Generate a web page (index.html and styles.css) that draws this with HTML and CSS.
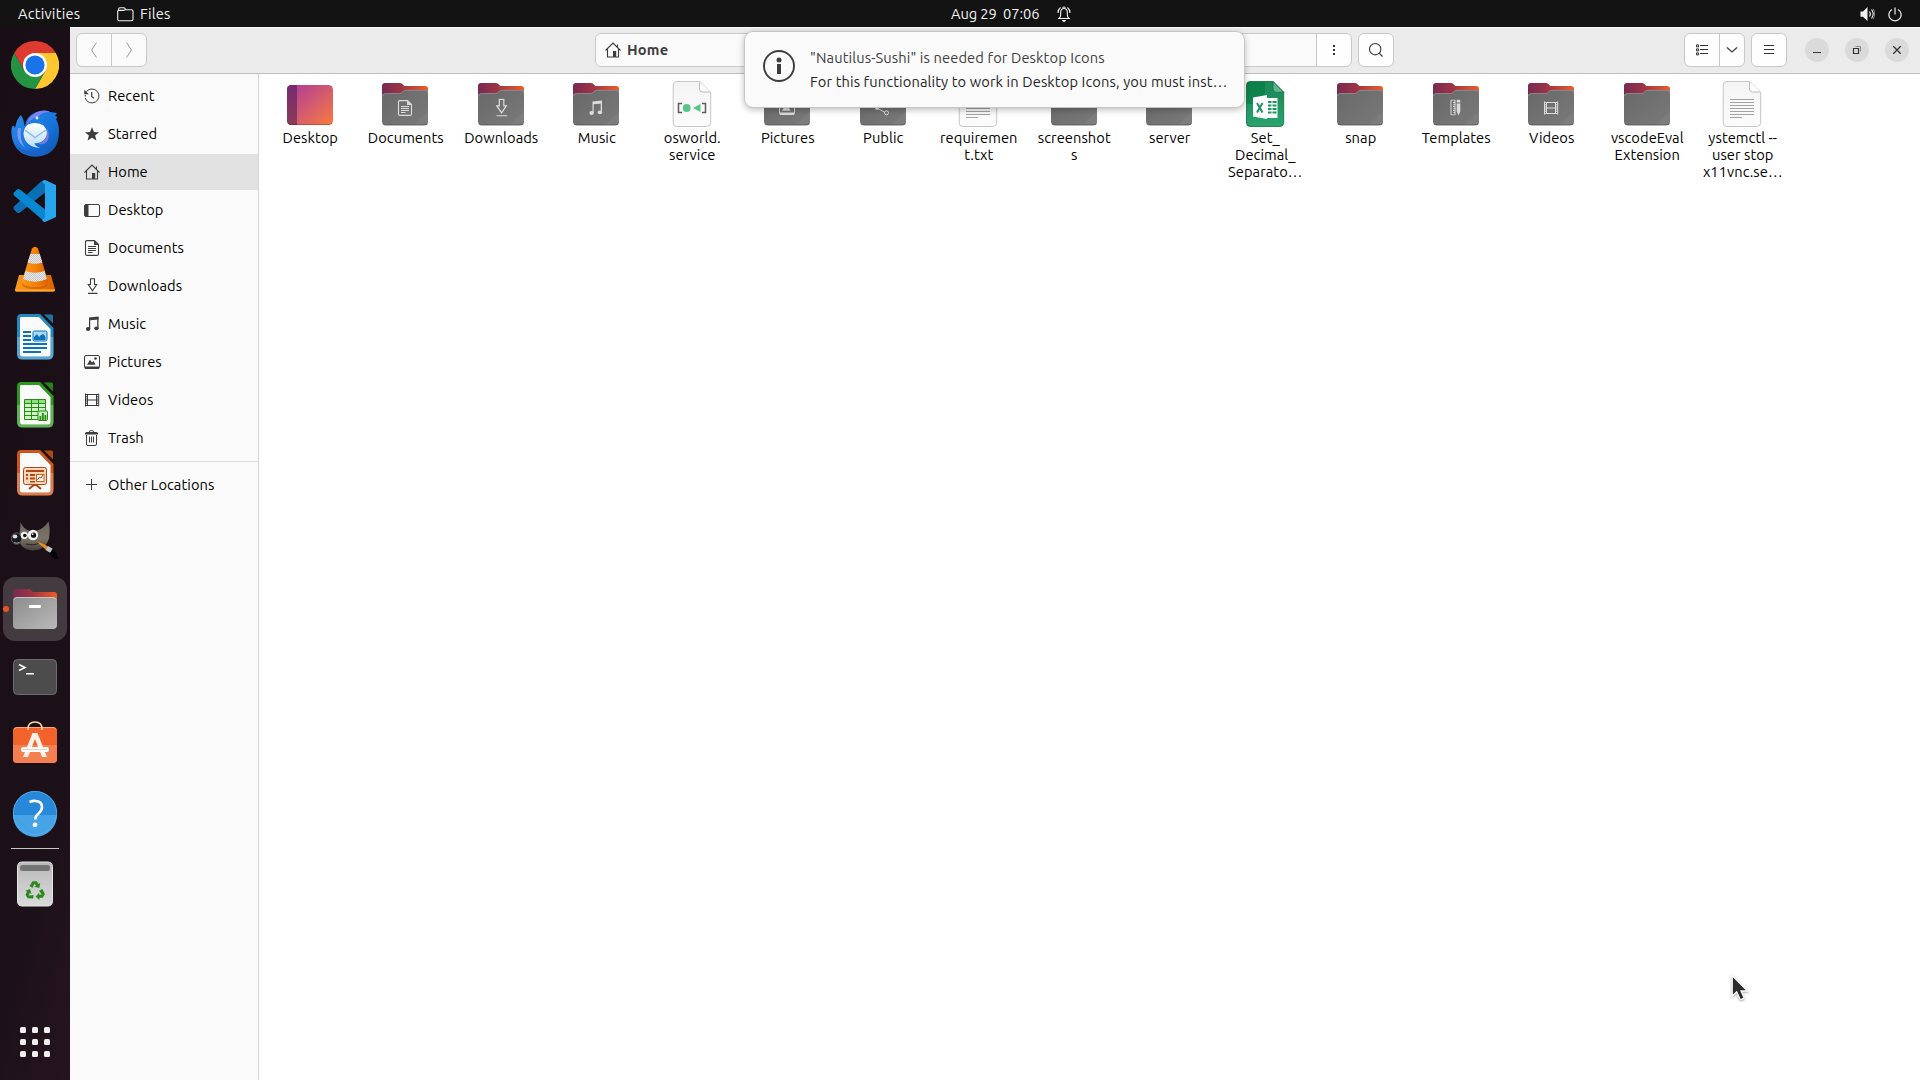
FILE: index.html
```html
<!DOCTYPE html>
<html lang="en">
<head>
<meta charset="utf-8">
<title>Files</title>
<link rel="stylesheet" href="styles.css">
</head>
<body>
<svg class="defs" aria-hidden="true">
  <defs>
    <linearGradient id="gTab" x1="0" y1="0" x2="1" y2="0"><stop offset="0" stop-color="#772953"/><stop offset=".45" stop-color="#a03543"/><stop offset="1" stop-color="#ef5c26"/></linearGradient>
    <linearGradient id="gFront" x1="0" y1="0" x2="1" y2="1"><stop offset="0" stop-color="#686868"/><stop offset="1" stop-color="#7a7a7a"/></linearGradient>
    <linearGradient id="gDesk" x1="0" y1="0" x2="1" y2="1"><stop offset="0" stop-color="#aa3a9a"/><stop offset=".55" stop-color="#d65d6b"/><stop offset="1" stop-color="#fa7a3c"/></linearGradient>
    <linearGradient id="gDeskL" x1="0" y1="0" x2="0" y2="1"><stop offset="0" stop-color="#762a72"/><stop offset="1" stop-color="#8d3b58"/></linearGradient>
    <linearGradient id="gDoc" x1="0" y1="0" x2="0" y2="1"><stop offset="0" stop-color="#f4f4f4"/><stop offset="1" stop-color="#fcfcfc"/></linearGradient>
    <linearGradient id="gXls" x1="0" y1="0" x2="0" y2="1"><stop offset="0" stop-color="#0b7f49"/><stop offset=".5" stop-color="#0f8852"/><stop offset=".5" stop-color="#1f9763"/><stop offset="1" stop-color="#2aa36d"/></linearGradient>
    <linearGradient id="gFiles" x1="0" y1="0" x2="1" y2="1"><stop offset="0" stop-color="#8c8c8c"/><stop offset="1" stop-color="#b9b9b9"/></linearGradient>
    <linearGradient id="gBird" x1="0" y1="0" x2="1" y2="1"><stop offset="0" stop-color="#2f8df0"/><stop offset=".6" stop-color="#1573da"/><stop offset="1" stop-color="#0f4fa8"/></linearGradient>
    <linearGradient id="gMail" x1="0" y1="0" x2="0" y2="1"><stop offset="0" stop-color="#ffffff"/><stop offset="1" stop-color="#b9dcfa"/></linearGradient>
    <linearGradient id="gCone" x1="0" y1="0" x2="1" y2="0"><stop offset="0" stop-color="#fb9a1e"/><stop offset=".5" stop-color="#f58207"/><stop offset="1" stop-color="#d96200"/></linearGradient>
    <linearGradient id="gTrash" x1="0" y1="0" x2="0" y2="1"><stop offset="0" stop-color="#b9b9b9"/><stop offset="1" stop-color="#dadada"/></linearGradient>
    <linearGradient id="gWilber" x1="0" y1="0" x2="0" y2="1"><stop offset="0" stop-color="#6a645b"/><stop offset=".6" stop-color="#7b7468"/><stop offset="1" stop-color="#45413a"/></linearGradient>
    <pattern id="pCheck" width="2" height="2" patternUnits="userSpaceOnUse"><path d="M0 0h2v2H0z" fill="#ececec"/><path d="M0 0h1v1H0zM1 1h1v1H1z" fill="#c2c2c2"/></pattern>

    <symbol id="folder" viewBox="0 0 48 48">
      <path d="M1 20V6q0-3 3-3h15q2 0 3 1.500L23.200 6H44q3 0 3 3v11z" fill="url(#gTab)"/>
      <path d="M1 41.500V16q0-2.800 3-2.800h14.500q1.500 0 2.500-1l1.500-1.400q1-.8 2.500-.8H44q3 0 3 3v28.500q0 3.500-3.500 3.500h-39Q1 45 1 41.500z" fill="url(#gFront)"/>
      <path d="M1.500 16q.2-2.500 3-2.500H18.800q1.500 0 2.400-1l1.300-1.400q1-.8 2.500-.8H44q2.600 0 2.700 2.500" fill="none" stroke="#929292" stroke-width=".8"/>
      <path d="M47 31v10.500q0 3.500-3.500 3.500H33z" fill="#7d7d7d"/>
      <path d="M2 43.800q1 1.200 3 1.200h38q2.200 0 3-1.200" fill="none" stroke="#505050" stroke-width=".8"/>
    </symbol>
    <symbol id="paper" viewBox="0 0 48 48">
      <path d="M8.500 1.500H31.500L42.500 12.300V42.500q0 4-4 4h-30q-3.500 0-3.500-3.500V5q0-3.500 3.500-3.500z" transform="translate(.2 0)" fill="url(#gDoc)" stroke="#c6c6c6"/>
      <path d="M31.500 1.800V9q0 3 3 3h7.800" fill="#fff" stroke="#bdbdbd"/>
    </symbol>

    <symbol id="recent" viewBox="0 0 16 16"><path d="M2.500 3.500A7 7 0 1 1 1.200 10" fill="none" stroke="currentColor"/><path d="M.3 1.800v4.500h4.500zM.8 7h1v1.500h-1z" fill="currentColor"/><path d="M7.700 4v4.500L10 10.200" fill="none" stroke="currentColor" stroke-width="1.200"/></symbol>
    <symbol id="star" viewBox="0 0 16 16"><path d="M8 1.200l2 4.800 5 .3-3.900 3.300L12.400 14.500 8 11.700 3.600 14.500 4.900 9.600 1 6.300 6 6z" fill="currentColor"/></symbol>
    <symbol id="home" viewBox="0 0 16 16"><path d="M.5 8.500L8 1l7.500 7.500M2.500 7v8h11V7M12.500 5.500v-3" fill="none" stroke="currentColor" stroke-width="1.100"/><path d="M8 9h3.200v6H8z" fill="currentColor"/></symbol>
    <symbol id="desktop" viewBox="0 0 16 16"><rect x=".5" y="2.500" width="15" height="12" rx="1.500" fill="none" stroke="currentColor"/><path d="M1 2.500h3.500v12H1z" fill="currentColor"/></symbol>
    <symbol id="doc" viewBox="0 0 16 16"><path d="M3 .6h7.500l4 4V14q0 1.400-1.400 1.400H3q-1.500 0-1.500-1.400V2Q1.500.6 3 .6z" fill="none" stroke="currentColor" stroke-width="1.100"/><path d="M10 .5v4.500h4.500zM4 6h8v1H4zM4 8h8v1H4zM4 10h8v1H4zM4 12h4.500v1H4z" fill="currentColor"/></symbol>
    <symbol id="down" viewBox="0 0 16 16"><path d="M6.500.7h4v5.800h2.200L8.500 12.800 4.300 6.500h2.200zM4 15.400h9.500" fill="none" stroke="currentColor" stroke-width="1.100"/></symbol>
    <symbol id="music" viewBox="0 0 16 16"><path d="M5 1.500L14.500.5v3L6.200 4.300V13H5z" fill="currentColor"/><path d="M13.200 1h1.300v11.500h-1.300z" fill="currentColor"/><ellipse cx="4.100" cy="13" rx="2.200" ry="1.900" fill="currentColor"/><ellipse cx="12.400" cy="12.300" rx="2.200" ry="1.900" fill="currentColor"/></symbol>
    <symbol id="pic" viewBox="0 0 16 16"><rect x=".5" y="1.500" width="15" height="12.500" rx="1.500" fill="none" stroke="currentColor"/><path d="M.5 12.500h15v1q0 1.500-1.500 1.500H2Q.5 15 .5 13.500zM3 10.800l3-5 2 2.800 1.500-1.600 2 3.800z" fill="currentColor"/><circle cx="11.500" cy="4.500" r="1.300" fill="currentColor"/></symbol>
    <symbol id="video" viewBox="0 0 16 16"><path d="M1.500 1.500v13M3.500 2v12M12.500 2v12M14.700 1.500v13" fill="none" stroke="currentColor"/><path d="M2.500 2v12M13.600 2v12" stroke="currentColor" stroke-width="1.500" stroke-dasharray="1 1.200"/><path d="M3.500 2.500h9M3.500 8h9M3.500 13.500h9" stroke="currentColor" fill="none"/></symbol>
    <symbol id="bin" viewBox="0 0 16 16"><path d="M2.500 5v9q0 1.500 1.500 1.500h7q1.500 0 1.500-1.500V5M5.500 6.500v6M7.500 6.500v6M9.500 6.500v6" fill="none" stroke="currentColor"/><path d="M1 3.500Q1 2 2.500 2H5q0-1.700 1.500-1.700h2Q10 .3 10 2h2.500Q14 2 14 3.500v1H1z" fill="currentColor"/><path d="M6 1.500h3" stroke="#fafafa" stroke-width=".8"/></symbol>
    <symbol id="plus" viewBox="0 0 16 16"><path d="M7.500 2v11M2 7.500h11" stroke="currentColor" fill="none"/></symbol>
    <symbol id="share" viewBox="0 0 16 16"><path d="M3 8l9-4.500M3 8l9 5" stroke="currentColor" fill="none"/><circle cx="3" cy="8" r="2" fill="currentColor"/><circle cx="12.500" cy="3.500" r="2" fill="none" stroke="currentColor"/><circle cx="12.500" cy="12.800" r="2" fill="#727272" stroke="currentColor"/></symbol>
    <symbol id="ruler" viewBox="0 0 16 16"><path d="M3.500.5h4v15h-4zM5.500 3h2M6 5h1.500M5.500 7h2M6 9h1.500M5.500 11h2M6 13h1.500" fill="none" stroke="currentColor"/><path d="M9.200 1q0-1 1.800-1t1.800 1v2H9.200zM9.200 4h3.600v8L11 16l-1.800-4z" fill="currentColor"/></symbol>
    <symbol id="lo" viewBox="0 0 48 48">
      <path d="M33 1.500h7.500q1.500 0 1.500 1.500v7.500z" fill="currentColor"/><path d="M33 1.500h7.500q1.500 0 1.500 1.500v7.500z" fill="#000" opacity=".15"/>
      <path d="M10 2.500h18.500L41 15.500V41q0 4-4 4H11.500q-4 0-4-4V5.500q0-3 2.500-3z" fill="#fafafa" stroke="currentColor" stroke-width="3"/>
      <path d="M7.500 24v17q0 4 4 4H37q4 0 4-4V24" fill="none" stroke="#fff" stroke-opacity=".25" stroke-width="3"/>
    </symbol>
  </defs>
</svg>

<div class="screen">
  <header class="topbar">
    <div class="topbar-left">
      <span class="activities">Activities</span>
      <svg class="app-ico" width="17" height="15" viewBox="0 0 17 15"><path d="M1.600 3V2.100Q1.600.7 3 .7h3.600q1 0 1.400.8l.5 1.200h5.900q1.600 0 1.600 1.600v7.900q0 1.600-1.600 1.600H2.200Q.7 13.800.7 12.200V4.400Q.7 3.400 1.800 3.400h4.700q1 0 1.500-.7" fill="none" stroke="#f2f2f2" stroke-width="1.100"/></svg>
      <span>Files</span>
    </div>
    <div class="clock"><span class="time">Aug 29&nbsp; 07:06</span>
      <svg width="14" height="16" viewBox="0 0 14 16"><path d="M1 12.500h12M2 12.500q1.700-1.500 1.700-4V6Q4 2.500 7 2.500T10.300 6v2.500q0 2.500 1.700 4M1 7q0-3.500 2.500-5.500M13 7q0-3.500-2.500-5.500M5.500 1.500q1.500-.9 3 0" fill="none" stroke="#f2f2f2" stroke-width="1.100"/><path d="M5 14h4q-.5 2-2 2t-2-2z" fill="#f2f2f2"/></svg>
    </div>
    <div class="status">
      <svg width="16" height="16" viewBox="0 0 16 16"><path d="M.5 5.500h2.500L7.500 1v14L3 10.800H.5z" fill="#f2f2f2"/><path d="M9.500 5.500q1.700 2.500 0 5M11.500 3.500q3.400 4.500 0 9" fill="none" stroke="#f2f2f2" stroke-width="1.100"/><path d="M13 2.800q3.200 5 0 10.400" fill="none" stroke="#8a8a8a"/></svg>
      <svg width="14" height="15" viewBox="0 0 14 15"><path d="M4 2.500a6.100 6.100 0 1 0 6 0M7 .5v7" fill="none" stroke="#f2f2f2" stroke-width="1.200"/></svg>
    </div>
  </header>

  <div class="workspace">
    <nav class="dock">
      <div class="dock-item"><svg class="dock-ico" viewBox="0 0 48 48"><path d="M24 0a24 24 0 0 1 20.800 12H24L13.600 30 3.200 12A24 24 0 0 1 24 0z" fill="#df3a30"/><path d="M44.800 12A24 24 0 0 1 24 48L34.400 30 24 12z" fill="#fdc82f"/><path d="M24 48A24 24 0 0 1 3.200 12L13.600 30 34.400 30z" fill="#259344"/><circle cx="24" cy="24" r="12" fill="#fff"/><circle cx="24" cy="24" r="9.600" fill="#1a73e8"/></svg></div>
      <div class="dock-item"><svg class="dock-ico" viewBox="0 -1 48 48"><path d="M1 17Q2.500 14 4 18q2-10 6-13 1 2 2 4l2 8q0-5 3-9 7-8 17-7.500 3 0 5 1.500l7 1q-1 2-2 2.500l2.500 2q-1 1-1.500 1.500 3.500 6 3 14Q47 44 28 46.500 10 48 3 34-1 24 1 17z" fill="url(#gBird)"/><path d="M16 14Q19 3 30 1q6-1 9 1-8 0-11 4-6 1-12 8z" fill="#7c83f2"/><path d="M3 33q7 9 20 8 12 0 18-13-1 12-10 17Q12 49 3 33z" fill="#1a62c5"/><path d="M7 18q-2 8 2 15l5 5q-6-9-4-20z" fill="#7d9bf4"/><path d="M36 19q1 12-9 15 8 1 10-4 2-6-1-11z" fill="#7b79e8"/><path d="M12.500 24q.5-11 11.500-11t12 10q-1 8-9 10-3 .5-4 .4 2 3 6 4.600-15-1-16.500-14z" fill="url(#gMail)"/><path d="M14 20l10 7.500L35 20" fill="none" stroke="#8bbce9" stroke-width="1.500"/><circle cx="26" cy="8" r="1.400" fill="#eaf6ff"/></svg></div>
      <div class="dock-item"><svg class="dock-ico" viewBox="0 0 48 48"><path d="M3 29.500L29.500 5 34 3v12.500L9 35.500q-1.500 1-3 0L3 32.500Q2 31 3 29.500z" fill="#0a6fb3"/><path d="M3 18.500L34 45V32.500L9 12.500q-1.500-1-3 0L3 15.500q-1 1.500 0 3z" fill="#0a87d1"/><path d="M34 3l11 5V40l-11 5q-2 0-3-2l3-2.500V7.500L31 5q1-2 3-2z" fill="#27a4ee"/></svg></div>
      <div class="dock-item"><svg class="dock-ico" viewBox="0 0 48 48"><path d="M8 30h32l4 14.500q.3 2-1.500 2h-37q-1.800 0-1.500-2z" fill="url(#gCone)"/><path d="M4 44.500h40q.3 2-1.500 2h-37q-1.800 0-1.500-2z" fill="#ffa834"/><path d="M11 36q0 6 13 6t13-6v2q0 6-13 6t-13-6z" fill="#c95a00" opacity=".6"/><path d="M21 3.500Q24 .2 27 3.500L37 36q0 5-13 5T11 36z" fill="url(#gCone)"/><path d="M19.300 9h9.400l2.700 8.500q-7.400 2.500-14.800 0zM14.600 26q9.400 3.500 18.800 0l2.500 8q-11.900 5.500-23.900 0z" fill="url(#pCheck)"/></svg></div>
      <div class="dock-item"><svg class="dock-ico lo-blue" viewBox="0 0 48 48"><use href="#lo"/><g fill="#0b74b8"><path d="M12 18h8v2h-8zM12 22h8v2h-8zM12 26h8v2h-8zM12 30h24v2H12zM12 34h24v2H12zM12 38h18v2H12z"/><rect x="22" y="18" width="14" height="10" rx="1.500" fill="#a8d8f5" stroke="#0b74b8"/><path d="M23 27v-3l3-3 2 3 2-2 2.500-1 2 3v3z"/></g></svg></div>
      <div class="dock-item"><svg class="dock-ico lo-green" viewBox="0 0 48 48"><use href="#lo"/><path d="M13.500 18.500h21v20h-21z" fill="#ccf4c4"/><path d="M13.500 18.500h21v4h-21z" fill="#8ee27f"/><path d="M13.500 18.500h21v20h-21zM13.500 22.500h21M13.500 26.500h21M13.500 30.500h21M13.500 34.500h21M20.500 18.500v20M27.500 18.500v20" fill="none" stroke="#2a8a17"/><rect x="27" y="30" width="9.500" height="9.500" rx="1" fill="#c8f4c0" stroke="#2a8a17"/><path d="M28.500 35h1.800v4h-1.800zM31 32h1.800v7H31zM33.500 34h1.800v5h-1.800z" fill="#2a8a17"/></svg></div>
      <div class="dock-item"><svg class="dock-ico lo-orange" viewBox="0 0 48 48"><use href="#lo"/><path d="M24 35l-6 5M24 35l6 5M24 33v4" stroke="#b14611" stroke-width="2"/><rect x="12.500" y="18.500" width="23" height="17" rx="2" fill="#fbd5bc" stroke="#b14611"/><path d="M15 21h18v2H15zM19 25h5v2h-5zM19 28.500h5v2h-5zM19 32h5v1.500h-5zM15 25h2v2h-2zM15 28.500h2v2h-2z" fill="#b14611"/><rect x="25.500" y="25.500" width="7.500" height="7" fill="#fff" stroke="#d55c1c"/><path d="M26.500 31l2-3 1.500 1 2-3" fill="none" stroke="#b14611"/></svg></div>
      <div class="dock-item"><svg class="dock-ico" viewBox="0 0 48 48"><path d="M9.500 5q2.500 7 9.500 9 12 1 18.500-9.500 2 8 .5 17Q35 31 26 33q-9 1.500-14-3Q7 26 8.500 17q1-6 1-12z" fill="url(#gWilber)"/><ellipse cx="5.600" cy="21.500" rx="5.200" ry="5.700" fill="#171a1e" stroke="#8a8f93" stroke-width=".6"/><ellipse cx="4" cy="19.500" rx="2.300" ry="2" fill="#d8dee2"/><path d="M3 25.500q3 1.500 5.500 0" fill="none" stroke="#9fa5a9"/><circle cx="13.300" cy="18.300" r="3.600" fill="#f1f1f1"/><circle cx="22" cy="18" r="5.200" fill="#f1f1f1"/><circle cx="13.800" cy="18.500" r="1.800" fill="#111"/><circle cx="22.500" cy="18.200" r="2.600" fill="#111"/><circle cx="21.600" cy="17.200" r=".9" fill="#fff"/><path d="M15 27q8 2 13-1" stroke="#24221e" fill="none"/><path d="M26 25q4 0 11 4.500l-2 3.300z" fill="#e88c28"/><path d="M37 29l5 3-2.500 4-5-3z" fill="#bfc4ca"/><path d="M41.500 32q5.500 3 5.500 10-6.500-.5-8.500-5.500z" fill="#050505"/></svg></div>
      <div class="dock-item active"><svg class="dock-ico" viewBox="0 0 48 48"><path d="M2 18V7q0-3 3-3h14l3 3h21q3 0 3 3v8z" fill="url(#gTab)"/><rect x="2" y="12" width="44" height="32" rx="4" fill="url(#gFiles)"/><path d="M3 14.500q1-2 3-2h36q2 0 3 2" stroke="#c4c4c4" fill="none"/><rect x="18" y="20" width="12" height="3" rx="1" fill="#fff"/></svg></div>
      <div class="dock-item"><svg class="dock-ico" viewBox="0 0 48 48"><rect x="2.500" y="6.500" width="43" height="35" rx="4" fill="#4c4c4c" stroke="#6d6d6d"/><path d="M8 11.500l6 3-6 3M15 20.700h8" fill="none" stroke="#fff" stroke-width="1.600"/></svg></div>
      <div class="dock-item"><svg class="dock-ico" viewBox="0 0 48 48"><rect x="2" y="6" width="44" height="36" rx="4" fill="#f2632c"/><path d="M2 24h44v14q0 4-4 4H6q-4 0-4-4z" fill="#f48051"/><path d="M3 8.500Q4 6.500 6 6.500h36q2 0 3 2" stroke="#fba47e" fill="none"/><path d="M17 9V8q0-7 7-7t7 7v1" fill="none" stroke="#f8d6a0" stroke-width="1.600"/><path d="M12 36l9.500-24h5L36 36h-5l-7-18-7 18z" fill="#fdf1ea"/><rect x="10" y="26" width="28" height="5" rx="2.500" fill="#fff"/><path d="M12 28.500h24" stroke="#f7b497" stroke-width=".7"/></svg></div>
      <div class="dock-item"><svg class="dock-ico" viewBox="0 0 48 48"><circle cx="24" cy="24" r="22" fill="#2787d9"/><path d="M2 26h44a22 22 0 0 1-44 0z" fill="#45a3e6"/><circle cx="24" cy="24" r="21.600" fill="none" stroke="#5ab2ec" stroke-width=".8"/><path d="M18.500 13Q22 11.500 25 12q6 .5 6 6 0 3.500-3.500 6.500-3.200 2.500-3.200 6" fill="none" stroke="#fff" stroke-width="2.600"/><circle cx="24" cy="35.800" r="2.400" fill="#fff"/></svg></div>
      <div class="dock-sep"></div>
      <div class="dock-item"><svg class="dock-ico" viewBox="0 0 48 48"><rect x="6.500" y="2" width="35" height="44" rx="4.500" fill="url(#gTrash)" stroke="#e6e6e6"/><rect x="9" y="5" width="30" height="6" rx="2.500" fill="#747474"/><g fill="#2a8a1c"><g id="arr"><path d="M18.500 26l3-4.800h4.200l1.800 2.800 1.800-1-1 5-5-1.300 1.700-1-1.500-2L21.500 28z"/></g><use href="#arr" transform="rotate(120 24 31.200)"/><use href="#arr" transform="rotate(240 24 31.200)"/></g></svg></div>
      <div class="apps"><i></i><i></i><i></i><i></i><i></i><i></i><i></i><i></i><i></i></div>
    </nav>

    <main class="window">
      <div class="headerbar">
        <div class="btns nav"><span><svg width="8" height="16" viewBox="0 0 8 16"><path d="M6.500.5L1.500 8l5 7.500" fill="none" stroke="#999"/></svg></span><span><svg width="8" height="16" viewBox="0 0 8 16"><path d="M1.500.5l5 7.500-5 7.500" fill="none" stroke="#999"/></svg></span></div>
        <div class="btns pathbar">
          <div class="path"><svg class="sym"><use href="#home"/></svg><b>Home</b></div>
          <span class="more"><svg width="4" height="14" viewBox="0 0 4 14"><path d="M1 2h2v2H1zM1 6h2v2H1zM1 10h2v2H1z" fill="#333"/></svg></span>
        </div>
        <div class="btns search"><span><svg width="16" height="16" viewBox="0 0 16 16"><circle cx="7.200" cy="7.200" r="5.700" fill="none" stroke="#3d3d3d" stroke-width="1.100"/><path d="M11.200 11.200l3.300 3.300" stroke="#3d3d3d" stroke-width="1.200"/></svg></span></div>
        <div class="btns view"><span><svg width="14" height="12" viewBox="0 0 14 12"><path d="M1.500.9h2v2h-2zM1.500 4.900h2v2h-2zM1.500 8.900h2v2h-2z" fill="none" stroke="#333"/><path d="M5 1.500h8M5 5.500h8M5 9.500h8" stroke="#333"/></svg></span><span class="narrow"><svg width="12" height="8" viewBox="0 0 12 8"><path d="M1 1.500l5 4.500 5-4.500" fill="none" stroke="#3d3d3d" stroke-width="1.200"/></svg></span></div>
        <div class="btns menu"><span><svg width="12" height="12" viewBox="0 0 12 12"><path d="M1 1.500h10M1 5.500h10M1 9.500h10" stroke="#333"/></svg></span></div>
        <div class="winctl">
          <span><svg width="10" height="10" viewBox="0 0 10 10"><path d="M1 7.500h8" stroke="#333"/></svg></span>
          <span><svg width="10" height="10" viewBox="0 0 10 10"><path d="M1.500 3.500h5v5h-5z" fill="none" stroke="#333" stroke-width="1.200"/><path d="M3.500 1.500h5v5" fill="none" stroke="#8a8a8a"/></svg></span>
          <span><svg width="10" height="10" viewBox="0 0 10 10"><path d="M1.300 1.300l7.400 7.400M8.700 1.300L1.300 8.700" stroke="#333" stroke-width="1.300"/></svg></span>
        </div>
      </div>

      <div class="content">
        <aside class="sidebar">
          <div class="place"><svg class="sym"><use href="#recent"/></svg><span>Recent</span></div>
          <div class="place"><svg class="sym"><use href="#star"/></svg><span>Starred</span></div>
          <div class="place selected"><svg class="sym"><use href="#home"/></svg><span>Home</span></div>
          <div class="place"><svg class="sym"><use href="#desktop"/></svg><span>Desktop</span></div>
          <div class="place"><svg class="sym"><use href="#doc"/></svg><span>Documents</span></div>
          <div class="place"><svg class="sym"><use href="#down"/></svg><span>Downloads</span></div>
          <div class="place"><svg class="sym"><use href="#music"/></svg><span>Music</span></div>
          <div class="place"><svg class="sym"><use href="#pic"/></svg><span>Pictures</span></div>
          <div class="place"><svg class="sym"><use href="#video"/></svg><span>Videos</span></div>
          <div class="place"><svg class="sym"><use href="#bin"/></svg><span>Trash</span></div>
          <div class="place-sep"></div>
          <div class="place"><svg class="sym"><use href="#plus"/></svg><span>Other Locations</span></div>
        </aside>

        <section class="files">
          <div class="file"><svg class="file-ico" viewBox="0 0 48 48"><rect x="1" y="5" width="46" height="40" rx="4.500" fill="url(#gDesk)"/><path d="M11 5v40H5.500Q1 45 1 40.500v-31Q1 5 5.500 5z" fill="url(#gDeskL)"/><path d="M2 43q1 1.600 3.500 1.600h37q2.500 0 3.500-1.600" fill="none" stroke="#000" stroke-opacity=".3" stroke-width=".8"/></svg><span>Desktop</span></div>
          <div class="file"><svg class="file-ico" viewBox="0 0 48 48"><use href="#folder"/><use class="emblem" href="#doc" x="16" y="20" width="16" height="16"/></svg><span>Documents</span></div>
          <div class="file"><svg class="file-ico" viewBox="0 0 48 48"><use href="#folder"/><use class="emblem" href="#down" x="15" y="18.500" width="18" height="18"/></svg><span>Downloads</span></div>
          <div class="file"><svg class="file-ico" viewBox="0 0 48 48"><use href="#folder"/><use class="emblem" href="#music" x="15.500" y="20" width="16" height="16"/></svg><span>Music</span></div>
          <div class="file"><svg class="file-ico" viewBox="0 0 48 48"><use href="#paper"/><path d="M14 23.500h-3.500v9H14M34 23.500h3.500v9H34" fill="none" stroke="#5c5c5c" stroke-width="1.500"/><circle cx="18.700" cy="28" r="3.900" fill="#57c785"/><path d="M32.500 24v8L25 28z" fill="#57c785"/></svg><span>osworld.<br>service</span></div>
          <div class="file"><svg class="file-ico" viewBox="0 0 48 48"><use href="#folder"/><use class="emblem" href="#pic" x="16" y="20" width="16" height="16"/></svg><span>Pictures</span></div>
          <div class="file"><svg class="file-ico" viewBox="0 0 48 48"><use href="#folder"/><use class="emblem" href="#share" x="15" y="20" width="16" height="16"/></svg><span>Public</span></div>
          <div class="file"><svg class="file-ico" viewBox="0 0 48 48"><use href="#paper"/><path id="lines" d="M12 19.500h24M12 22.500h24M12 25.500h24M12 28.500h24M12 31.500h24M12 34.500h24M12 37.500h12" stroke="#a3a3a3"/></svg><span>requiremen<br>t.txt</span></div>
          <div class="file"><svg class="file-ico"><use href="#folder"/></svg><span>screenshot<br>s</span></div>
          <div class="file"><svg class="file-ico"><use href="#folder"/></svg><span>server</span></div>
          <div class="file"><svg class="file-ico" viewBox="0 0 48 48"><path d="M9 1.500H32L42.700 12.300V42.500q0 4-4 4H9q-3.500 0-3.500-3.500V5Q5.500 1.500 9 1.500z" fill="url(#gXls)" stroke="#0c6b3f" stroke-width=".8"/><path d="M32 1.500V9q0 3.300 3 3.300h7.700z" fill="#5db58c" stroke="#0c6b3f" stroke-width=".8"/><path d="M24 2h8v7q0 3 3 3h7.300v12H24z" fill="#fff" opacity=".08"/><path d="M26 18h10.500v20H26z" fill="#fff"/><path d="M27 21h3.500v2H27zM31.500 21h4v2h-4zM27 24.500h3.500v2H27zM31.500 24.500h4v2h-4zM27 28h3.500v2H27zM31.500 28h4v2h-4zM27 31.500h3.500v2H27zM31.500 31.500h4v2h-4z" fill="#1c9460"/><path d="M12 17.500l14-2.500v24l-14-2.500z" fill="#fff"/><path d="M16 23l5.500 9.500M21.500 23L16 32.500" stroke="#1c9460" stroke-width="2"/></svg><span>Set_<br>Decimal_<br>Separato…</span></div>
          <div class="file"><svg class="file-ico"><use href="#folder"/></svg><span>snap</span></div>
          <div class="file"><svg class="file-ico" viewBox="0 0 48 48"><use href="#folder"/><use class="emblem" href="#ruler" x="15.500" y="19.500" width="16" height="16"/></svg><span>Templates</span></div>
          <div class="file"><svg class="file-ico" viewBox="0 0 48 48"><use href="#folder"/><use class="emblem" href="#video" x="15" y="20" width="18" height="16"/></svg><span>Videos</span></div>
          <div class="file"><svg class="file-ico"><use href="#folder"/></svg><span>vscodeEval<br>Extension</span></div>
          <div class="file"><svg class="file-ico" viewBox="0 0 48 48"><use href="#paper"/><use href="#lines"/></svg><span>ystemctl --<br>user stop<br>x11vnc.se…</span></div>
        </section>
      </div>
    </main>
  </div>

  <div class="notification">
    <svg width="32" height="32" viewBox="0 0 32 32"><circle cx="16" cy="16" r="15" fill="none" stroke="#3d3d3d" stroke-width="1.900"/><circle cx="16" cy="10" r="2.500" fill="#3d3d3d"/><path d="M14 14h4v10h-4z" fill="#3d3d3d"/></svg>
    <div class="note-text"><div class="note-title">"Nautilus-Sushi" is needed for Desktop Icons</div><div class="note-body">For this functionality to work in Desktop Icons, you must inst…</div></div>
  </div>
  <svg class="cursor" width="20" height="30" viewBox="0 0 20 30"><path d="M1.200 1.500v20.500l4.500-4.200 3.200 7.200q2.500 1 4.200-1.300L10 17h6.500z" fill="#2b2b2b" stroke="#fff" stroke-width="1.300"/></svg>
</div>
</body>
</html>
```
FILE: styles.css
```css
* { box-sizing: border-box; }
body { margin: 0; font-family: Ubuntu, "Noto Sans", sans-serif; font-size: 14.667px; letter-spacing: .06px; color: #000; }
svg { display: block; flex: none; }
.defs { position: absolute; width: 0; height: 0; }
.screen { position: relative; width: 1920px; height: 1080px; overflow: hidden; display: flex; flex-direction: column; background: #fff; }

.topbar { height: 27px; flex: none; background: #131313; color: #f2f2f2; display: grid; grid-template-columns: 1fr auto 1fr; align-items: center; line-height: 28px; }
.topbar-left { display: flex; align-items: center; padding-left: 18px; letter-spacing: .22px; }
.app-ico { margin: 0 6px 0 36px; }
.activities { width: 63px; white-space: nowrap; }
.clock { display: flex; align-items: center; justify-content: space-between; width: 222px; padding-left: 102px; white-space: nowrap; }
.time { letter-spacing: -.1px; line-height: 26px; padding-bottom: 1px; }
.status { display: flex; justify-content: flex-end; align-items: center; gap: 12px; padding-right: 18px; }

.workspace { flex: 1; display: flex; min-height: 0; }
.dock { width: 70px; flex: none; display: flex; flex-direction: column; align-items: center; padding-top: 4px; background: linear-gradient(105deg, #190e15 0%, #1c1118 75%, #26141f 100%); }
.dock-item { width: 64px; height: 64px; margin: 2px 0; flex: none; border-radius: 12px; display: flex; align-items: center; justify-content: center; position: relative; }
.dock-item.active { background: #433b40; }
.dock-item.active::before { content: ""; position: absolute; left: 0; top: 29px; width: 6px; height: 6px; border-radius: 50%; background: #e95420; }
.dock-ico { width: 48px; height: 48px; }
.lo-blue { color: #2387c2; }
.lo-green { color: #2c9a1c; }
.lo-orange { color: #cd5518; }
.dock-sep { width: 48px; height: 1px; flex: none; margin: 1px 0; background: #c9c6c8; }
.apps { margin: auto 0 23px; display: grid; grid-template-columns: repeat(3, 6px); gap: 6px; }
.apps i { width: 6px; height: 6px; border-radius: 1.500px; background: #f0eeee; }

.window { flex: 1; display: flex; flex-direction: column; min-width: 0; }
.headerbar { height: 47px; flex: none; background: #ebebeb; border-top: 1px solid #f9f9f9; border-bottom: 1px solid #bdbdbd; display: flex; align-items: flex-start; padding: 5px 11px 0 6px; }
.btns { height: 34px; display: flex; flex: none; border: 1px solid #c8c8c8; border-radius: 6px; background: #fefefe; color: #3d3d3d; }
.btns > span { flex: 1; display: flex; align-items: center; justify-content: center; }
.btns > span + span, .btns > .more { border-left: 1px solid #c8c8c8; }
.nav { width: 71px; background: #fafafa; }
.pathbar { width: 757px; margin-left: 448px; }
.path { flex: 1; display: flex; align-items: center; gap: 6px; padding-left: 9px; background: #fafafa; border-radius: 6px 0 0 6px; }
.path b { font-weight: 700; padding-bottom: 2px; letter-spacing: .2px; }
.btns > .more { flex: none; width: 35px; }
.search { width: 36px; margin-left: 6px; }
.view { width: 61px; margin-left: 290px; }
.btns > .narrow { flex: none; width: 25px; }
.menu { width: 36px; margin-left: 6px; }
.winctl { display: flex; gap: 16px; margin-left: auto; padding-top: 5px; }
.winctl span { width: 24px; height: 24px; border-radius: 50%; background: #dadada; display: flex; align-items: center; justify-content: center; }

.content { flex: 1; display: flex; min-height: 0; }
.sidebar { width: 189px; flex: none; background: #fafafa; border-right: 1px solid #d5d5d5; padding-top: 4px; }
.place { height: 36px; margin-bottom: 2px; padding-left: 14px; display: flex; align-items: center; gap: 8px; white-space: nowrap; }
.place span { padding-bottom: 2px; }
.place.selected { background: #e1e1e1; }
.sym { width: 16px; height: 16px; color: #3d3d3d; }
.place-sep { height: 1px; background: #dcdcdc; margin: 5px 0; }

.files { flex: 1; display: grid; grid-template-columns: repeat(17, 95.500px); align-content: start; padding: 6px 0 0 3px; }
.file { display: flex; flex-direction: column; align-items: center; text-align: center; line-height: 17px; white-space: nowrap; }
.file span { padding-left: 1px; }
.file-ico { width: 48px; height: 48px; margin-bottom: 1px; }
.emblem { color: #dcdcdc; }

.notification { position: absolute; left: 744px; top: 31px; width: 501px; height: 77px; border: 1px solid #c6c6c6; border-radius: 9px; background: #fafafa; box-shadow: 0 2px 6px rgba(0, 0, 0, .25); padding: 14px 16px 0 18px; display: flex; gap: 15px; letter-spacing: .115px; }
.notification svg { margin-top: 4px; }
.note-text { line-height: 24px; white-space: nowrap; }
.note-title { color: #404040; }
.note-body { color: #262626; }
.cursor { position: absolute; left: 1731px; top: 974px; filter: drop-shadow(0 1px 1px rgba(0, 0, 0, .35)); }
```
